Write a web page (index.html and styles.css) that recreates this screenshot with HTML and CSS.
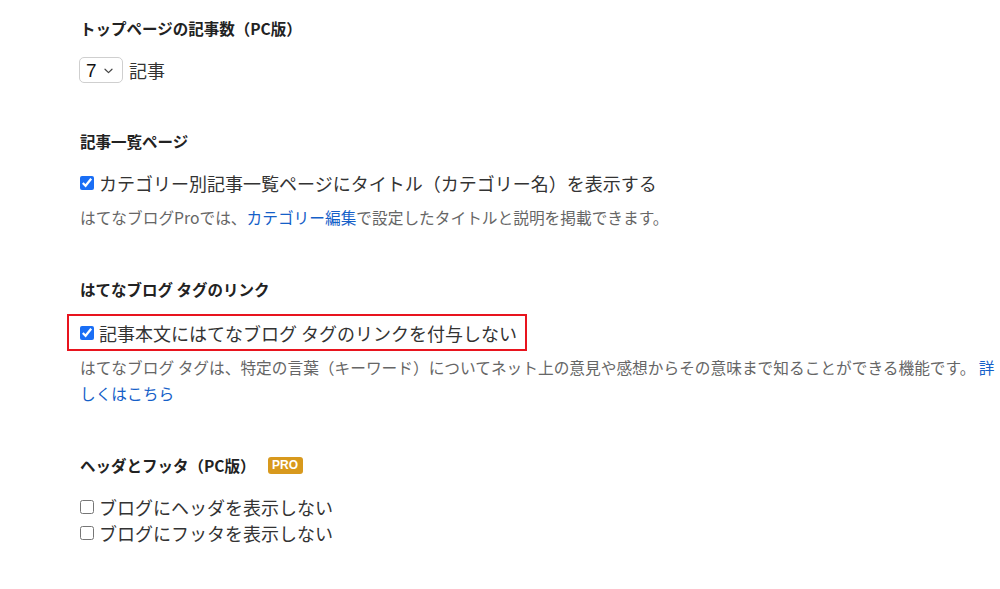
FILE: index.html
```html
<!DOCTYPE html>
<html lang="ja">
<head>
<meta charset="utf-8">
<link rel="stylesheet" href="styles.css">
</head>
<body>
<div class="page">
  <section class="sec sec-first">
    <h3 class="sec-title">トップページの記事数（PC版）</h3>
    <div class="select-row">
      <span class="select-wrap">
        <select class="select"><option>7</option></select>
        <svg class="chev" width="9" height="6" viewBox="0 0 9 6"><path d="M1 1.2 L4.5 4.6 L8 1.2" fill="none" stroke="#444" stroke-width="1.2" stroke-linecap="round" stroke-linejoin="round"/></svg>
      </span>
      <span class="unit">記事</span>
    </div>
  </section>

  <section class="sec">
    <h3 class="sec-title">記事一覧ページ</h3>
    <label class="check"><input type="checkbox" checked><span>カテゴリー別記事一覧ページにタイトル（カテゴリー名）を表示する</span></label>
    <p class="note">はてなブログProでは、<a href="#" class="link">カテゴリー編集</a>で設定したタイトルと説明を掲載できます。</p>
  </section>

  <section class="sec">
    <h3 class="sec-title">はてなブログ タグのリンク</h3>
    <div class="highlight">
      <label class="check"><input type="checkbox" checked><span>記事本文にはてなブログ タグのリンクを付与しない</span></label>
    </div>
    <p class="note note-tight">はてなブログ タグは、特定の言葉（キーワード）についてネット上の意見や感想からその意味まで知ることができる機能です。 <a href="#" class="link">詳しくはこちら</a></p>
  </section>

  <section class="sec">
    <h3 class="sec-title">ヘッダとフッタ（PC版）<span class="badge">PRO</span></h3>
    <label class="check"><input type="checkbox"><span>ブログにヘッダを表示しない</span></label>
    <label class="check"><input type="checkbox"><span>ブログにフッタを表示しない</span></label>
  </section>
</div>
</body>
</html>
```

FILE: styles.css
```css
* { box-sizing: border-box; }
html, body { margin: 0; padding: 0; background: #fff; }
body {
  font-family: "Noto Sans CJK JP", "Noto Sans", sans-serif;
  color: #333;
}
.page {
  padding: 17px 0 0 80px;
  width: 1000px;
}
.sec { margin-top: 47px; }
.sec-first { margin-top: 0; }
.sec-title {
  margin: 0 0 18px;
  font-size: 15.5px;
  line-height: 22px;
  font-weight: 700;
  color: #222;
  display: flex;
  align-items: center;
}
.select-row {
  display: flex;
  align-items: center;
  gap: 6px;
  height: 26px;
}
.select-wrap {
  position: relative;
  display: inline-block;
  margin-left: -1px;
}
.select {
  -webkit-appearance: none;
  appearance: none;
  width: 44px;
  height: 26px;
  border: 1px solid #cfcfcf;
  border-radius: 5px;
  background: #fff;
  font-family: "Liberation Sans", sans-serif;
  font-size: 19px;
  color: #111;
  padding: 0 0 0 6px;
  margin: 0;
  display: block;
}
.chev {
  position: absolute;
  left: 25px;
  top: 11px;
  pointer-events: none;
}
.unit { font-size: 18px; color: #333; }
.check {
  display: flex;
  align-items: center;
  height: 26px;
  font-size: 18px;
  color: #333;
}
.check input {
  width: 14px;
  height: 14px;
  margin: 0 5px 0 0;
  accent-color: #1a6ef5;
}
.note {
  margin: 9px 0 0;
  font-size: 15.7px;
  line-height: 26px;
  color: #666;
  width: 920px;
}
.note-tight { margin-top: 4px; }
.link { color: #1560c8; text-decoration: none; }
.highlight {
  margin-top: -4px;
  margin-left: -13px;
  width: 460px;
  height: 37px;
  border: 2px solid #e8141e;
  padding: 0 0 0 11px;
  display: flex;
  align-items: center;
}
.badge {
  display: inline-flex;
  align-items: center;
  justify-content: center;
  margin-left: 12px;
  width: 35px;
  height: 17px;
  border-radius: 3px;
  background: #d8991d;
  color: #fff;
  font-family: "Liberation Sans", sans-serif;
  font-size: 12px;
  font-weight: 700;
}
```
